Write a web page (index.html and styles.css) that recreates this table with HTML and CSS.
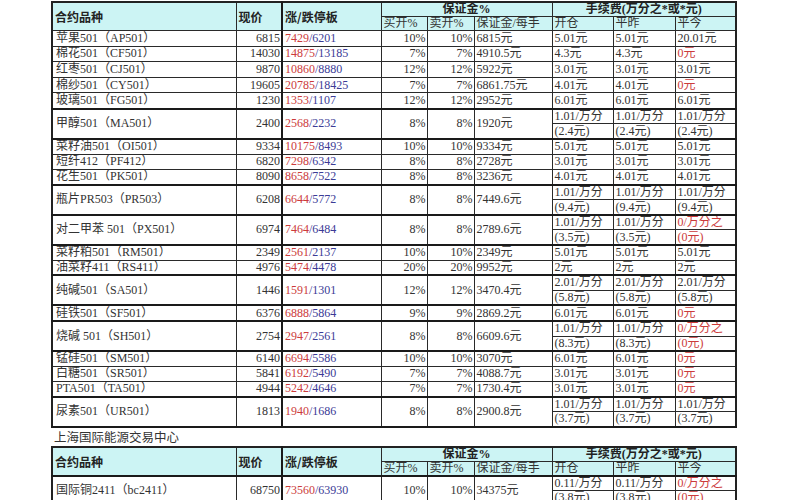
FILE: index.html
```html
<!DOCTYPE html>
<html lang="zh-CN">
<head>
<meta charset="utf-8">
<title>期货保证金及手续费</title>
<link rel="stylesheet" href="styles.css">
</head>
<body>
<div class="page">
<table class="grid">
<colgroup>
<col class="c-name"><col class="c-price"><col class="c-lim"><col class="c-pct"><col class="c-pct2"><col class="c-mar"><col class="c-fee"><col class="c-fee2"><col class="c-fee">
</colgroup>
<thead>
<tr class="h1"><th rowspan="2" class="hb">合约品种</th><th rowspan="2" class="hb price-col">现价</th><th rowspan="2" class="hb">涨/跌停板</th><th colspan="3" class="hc">保证金%</th><th colspan="3" class="hc">手续费(万分之*或*元)</th></tr>
<tr class="h2"><th>买开%</th><th>卖开%</th><th>保证金/每手</th><th>开仓</th><th>平昨</th><th>平今</th></tr>
</thead>
<tbody>
<tr class="first"><td class="name">苹果501（AP501）</td><td class="num price-col">6815</td><td><span class="up">7429</span><span class="dn">/6201</span></td><td class="num">10%</td><td class="num">10%</td><td>6815元</td><td>5.01元</td><td>5.01元</td><td>20.01元</td></tr>
<tr class="first"><td class="name">棉花501（CF501）</td><td class="num price-col">14030</td><td><span class="up">14875</span><span class="dn">/13185</span></td><td class="num">7%</td><td class="num">7%</td><td>4910.5元</td><td>4.3元</td><td>4.3元</td><td class="up">0元</td></tr>
<tr class="first"><td class="name">红枣501（CJ501）</td><td class="num price-col">9870</td><td><span class="up">10860</span><span class="dn">/8880</span></td><td class="num">12%</td><td class="num">12%</td><td>5922元</td><td>3.01元</td><td>3.01元</td><td>3.01元</td></tr>
<tr class="first"><td class="name">棉纱501（CY501）</td><td class="num price-col">19605</td><td><span class="up">20785</span><span class="dn">/18425</span></td><td class="num">7%</td><td class="num">7%</td><td>6861.75元</td><td>4.01元</td><td>4.01元</td><td class="up">0元</td></tr>
<tr class="first"><td class="name">玻璃501（FG501）</td><td class="num price-col">1230</td><td><span class="up">1353</span><span class="dn">/1107</span></td><td class="num">12%</td><td class="num">12%</td><td>2952元</td><td>6.01元</td><td>6.01元</td><td>6.01元</td></tr>
<tr class="d1"><td rowspan="2" class="name">甲醇501（MA501）</td><td rowspan="2" class="num price-col">2400</td><td rowspan="2"><span class="up">2568</span><span class="dn">/2232</span></td><td rowspan="2" class="num">8%</td><td rowspan="2" class="num">8%</td><td rowspan="2">1920元</td><td>1.01/万分</td><td>1.01/万分</td><td>1.01/万分</td></tr>
<tr class="d2"><td>(2.4元)</td><td>(2.4元)</td><td>(2.4元)</td></tr>
<tr class="after"><td class="name">菜籽油501（OI501）</td><td class="num price-col">9334</td><td><span class="up">10175</span><span class="dn">/8493</span></td><td class="num">10%</td><td class="num">10%</td><td>9334元</td><td>5.01元</td><td>5.01元</td><td>5.01元</td></tr>
<tr><td class="name">短纤412（PF412）</td><td class="num price-col">6820</td><td><span class="up">7298</span><span class="dn">/6342</span></td><td class="num">8%</td><td class="num">8%</td><td>2728元</td><td>3.01元</td><td>3.01元</td><td>3.01元</td></tr>
<tr><td class="name">花生501（PK501）</td><td class="num price-col">8090</td><td><span class="up">8658</span><span class="dn">/7522</span></td><td class="num">8%</td><td class="num">8%</td><td>3236元</td><td>4.01元</td><td>4.01元</td><td>4.01元</td></tr>
<tr class="d1"><td rowspan="2" class="name">瓶片PR503（PR503）</td><td rowspan="2" class="num price-col">6208</td><td rowspan="2"><span class="up">6644</span><span class="dn">/5772</span></td><td rowspan="2" class="num">8%</td><td rowspan="2" class="num">8%</td><td rowspan="2">7449.6元</td><td>1.01/万分</td><td>1.01/万分</td><td>1.01/万分</td></tr>
<tr class="d2"><td>(9.4元)</td><td>(9.4元)</td><td>(9.4元)</td></tr>
<tr class="d1"><td rowspan="2" class="name">对二甲苯 501（PX501）</td><td rowspan="2" class="num price-col">6974</td><td rowspan="2"><span class="up">7464</span><span class="dn">/6484</span></td><td rowspan="2" class="num">8%</td><td rowspan="2" class="num">8%</td><td rowspan="2">2789.6元</td><td>1.01/万分</td><td>1.01/万分</td><td class="up">0/万分之</td></tr>
<tr class="d2"><td>(3.5元)</td><td>(3.5元)</td><td class="up">(0元)</td></tr>
<tr class="after"><td class="name">菜籽粕501（RM501）</td><td class="num price-col">2349</td><td><span class="up">2561</span><span class="dn">/2137</span></td><td class="num">10%</td><td class="num">10%</td><td>2349元</td><td>5.01元</td><td>5.01元</td><td>5.01元</td></tr>
<tr class="before"><td class="name">油菜籽411（RS411）</td><td class="num price-col">4976</td><td><span class="up">5474</span><span class="dn">/4478</span></td><td class="num">20%</td><td class="num">20%</td><td>9952元</td><td>2元</td><td>2元</td><td>2元</td></tr>
<tr class="d1"><td rowspan="2" class="name">纯碱501（SA501）</td><td rowspan="2" class="num price-col">1446</td><td rowspan="2"><span class="up">1591</span><span class="dn">/1301</span></td><td rowspan="2" class="num">12%</td><td rowspan="2" class="num">12%</td><td rowspan="2">3470.4元</td><td>2.01/万分</td><td>2.01/万分</td><td>2.01/万分</td></tr>
<tr class="d2"><td>(5.8元)</td><td>(5.8元)</td><td>(5.8元)</td></tr>
<tr class="thick"><td class="name">硅铁501（SF501）</td><td class="num price-col">6376</td><td><span class="up">6888</span><span class="dn">/5864</span></td><td class="num">9%</td><td class="num">9%</td><td>2869.2元</td><td>6.01元</td><td>6.01元</td><td class="up">0元</td></tr>
<tr class="d1"><td rowspan="2" class="name">烧碱 501（SH501）</td><td rowspan="2" class="num price-col">2754</td><td rowspan="2"><span class="up">2947</span><span class="dn">/2561</span></td><td rowspan="2" class="num">8%</td><td rowspan="2" class="num">8%</td><td rowspan="2">6609.6元</td><td>1.01/万分</td><td>1.01/万分</td><td class="up">0/万分之</td></tr>
<tr class="d2"><td>(8.3元)</td><td>(8.3元)</td><td class="up">(0元)</td></tr>
<tr class="after"><td class="name">锰硅501（SM501）</td><td class="num price-col">6140</td><td><span class="up">6694</span><span class="dn">/5586</span></td><td class="num">10%</td><td class="num">10%</td><td>3070元</td><td>6.01元</td><td>6.01元</td><td class="up">0元</td></tr>
<tr><td class="name">白糖501（SR501）</td><td class="num price-col">5841</td><td><span class="up">6192</span><span class="dn">/5490</span></td><td class="num">7%</td><td class="num">7%</td><td>4088.7元</td><td>3.01元</td><td>3.01元</td><td class="up">0元</td></tr>
<tr class="before"><td class="name">PTA501（TA501）</td><td class="num price-col">4944</td><td><span class="up">5242</span><span class="dn">/4646</span></td><td class="num">7%</td><td class="num">7%</td><td>1730.4元</td><td>3.01元</td><td>3.01元</td><td class="up">0元</td></tr>
<tr class="d1"><td rowspan="2" class="name">尿素501（UR501）</td><td rowspan="2" class="num price-col">1813</td><td rowspan="2"><span class="up">1940</span><span class="dn">/1686</span></td><td rowspan="2" class="num">8%</td><td rowspan="2" class="num">8%</td><td rowspan="2">2900.8元</td><td>1.01/万分</td><td>1.01/万分</td><td>1.01/万分</td></tr>
<tr class="d2"><td>(3.7元)</td><td>(3.7元)</td><td>(3.7元)</td></tr>
</tbody>
</table>

<div class="section">上海国际能源交易中心</div>

<table class="grid">
<colgroup>
<col class="c-name"><col class="c-price"><col class="c-lim"><col class="c-pct"><col class="c-pct2"><col class="c-mar"><col class="c-fee"><col class="c-fee2"><col class="c-fee">
</colgroup>
<thead>
<tr class="h1"><th rowspan="2" class="hb">合约品种</th><th rowspan="2" class="hb price-col">现价</th><th rowspan="2" class="hb">涨/跌停板</th><th colspan="3" class="hc">保证金%</th><th colspan="3" class="hc">手续费(万分之*或*元)</th></tr>
<tr class="h2"><th>买开%</th><th>卖开%</th><th>保证金/每手</th><th>开仓</th><th>平昨</th><th>平今</th></tr>
</thead>
<tbody>
<tr class="d1"><td rowspan="2" class="name">国际铜2411（bc2411）</td><td rowspan="2" class="num price-col">68750</td><td rowspan="2"><span class="up">73560</span><span class="dn">/63930</span></td><td rowspan="2" class="num">10%</td><td rowspan="2" class="num">10%</td><td rowspan="2">34375元</td><td>0.11/万分</td><td>0.11/万分</td><td class="up">0/万分之</td></tr>
<tr class="d2"><td>(3.8元)</td><td>(3.8元)</td><td class="up">(0元)</td></tr>
</tbody>
</table>
</div>
</body>
</html>
```

FILE: styles.css
```css
html, body {
  margin: 0;
  padding: 0;
  background: #ffffff;
}

.page {
  padding: 1px 0 0 51px;
  font-family: "Liberation Serif", "Noto Sans CJK SC", serif;
  font-size: 12px;
  color: #333333;
  text-spacing-trim: space-all;
}

.grid {
  border-collapse: collapse;
  table-layout: fixed;
  width: 684px;
  border: 2px solid #222222;
}

.c-name { width: 184px; }
.c-price { width: 46px; }
.c-lim { width: 99px; }
.c-pct { width: 46px; }
.c-pct2 { width: 47px; }
.c-mar { width: 78px; }
.c-fee { width: 61px; }
.c-fee2 { width: 62px; }

.grid th,
.grid td {
  border: 1px solid #2a2a2a;
  padding: 0 2px;
  line-height: 13px;
  height: 14.15px;
  text-align: left;
  vertical-align: middle;
  white-space: nowrap;
  overflow: hidden;
}

.grid th {
  background: #ccf4f4;
  font-weight: normal;
  color: #333333;
  height: 13px;
}

.grid th.hb {
  font-family: "Noto Sans CJK SC", sans-serif;
  font-weight: 700;
  color: #222222;
}

.grid th.hc {
  text-align: center;
  font-weight: 700;
  color: #222222;
}

.grid .price-col {
  border-right: 2px solid #1a1a1a;
}

.grid td.num {
  text-align: right;
  padding-right: 1px;
}

.grid td.name {
  padding-left: 3px;
}

.grid tr.first > td {
  height: 14.6px;
}

.grid tr.d1 > td {
  border-top: 2px solid #1a1a1a;
  height: 13.5px;
}

.grid tr.d2 > td {
  border-bottom: 2px solid #1a1a1a;
  height: 13.5px;
}

.grid tr.d1 > td[rowspan] {
  border-bottom: 2px solid #1a1a1a;
  height: auto;
}

.grid tr.after > td,
.grid tr.before > td {
  height: 13.65px;
}

.grid tr.thick > td {
  border-top: 2px solid #1a1a1a;
  border-bottom: 2px solid #1a1a1a;
  height: 14px;
}

.up {
  color: #cc3b3b;
}

.dn {
  color: #3b3b96;
}

.section {
  height: 18px;
  line-height: 18px;
  padding-left: 3px;
  font-family: "Noto Sans CJK SC", sans-serif;
  font-size: 12.5px;
  color: #333333;
}
```
